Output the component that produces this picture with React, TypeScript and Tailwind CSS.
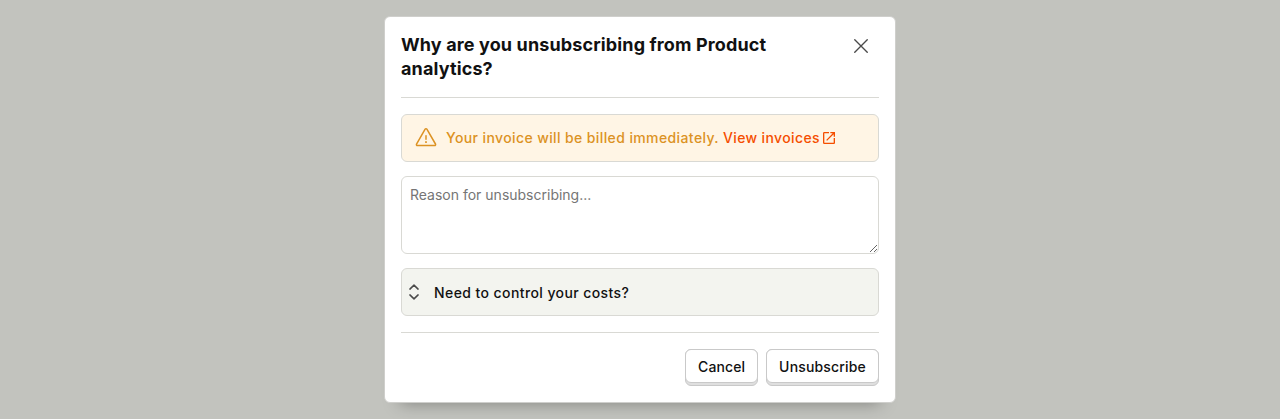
import React from "react";

function CloseIcon() {
  return (
    <svg className="h-6 w-6" viewBox="0 0 24 24" fill="none" stroke="#4a4a4a" strokeWidth="1.4" strokeLinecap="round">
      <path d="M5.75 5.75l12.5 12.5M18.25 5.75l-12.5 12.5" />
    </svg>
  );
}

function WarningIcon() {
  return (
    <svg className="h-6 w-6 shrink-0" viewBox="0 0 24 24" fill="none" stroke="#dc9223" strokeWidth="1.5" strokeLinecap="round" strokeLinejoin="round">
      <path d="M11.13 3.2a1 1 0 0 1 1.74 0l8.6 14.8a1 1 0 0 1-.87 1.5H3.4a1 1 0 0 1-.87-1.5z" />
      <path d="M12 9.75v3.5" />
      <path d="M12 16v.2" strokeWidth="1.8" />
    </svg>
  );
}

function OpenInNewIcon() {
  return (
    <svg className="h-4 w-4" viewBox="0 0 24 24" fill="#f54e00">
      <path d="M19 19H5V5h7V3H5a2 2 0 0 0-2 2v14a2 2 0 0 0 2 2h14c1.1 0 2-.9 2-2v-7h-2v7zM14 3v2h3.59l-9.83 9.83 1.41 1.41L19 6.41V10h2V3h-7z" />
    </svg>
  );
}

function ExpandIcon() {
  return (
    <svg className="h-6 w-6" viewBox="0 0 24 24" fill="none" stroke="#4a4a4a" strokeWidth="1.5" strokeLinecap="round" strokeLinejoin="round">
      <path d="M7.9 9.1L12 5.1l4.1 4M7.9 14.9L12 18.9l4.1-4" />
    </svg>
  );
}

function Button({ children, className }: { children: React.ReactNode; className?: string }) {
  return (
    <button className={`h-[37px] rounded-md border border-[#c9c9c9] bg-[#dfdfdf] pb-[2px] text-sm font-medium text-[#111] ${className ?? ""}`}>
      <span className="-mx-px -mt-px flex h-[34px] items-center rounded-md border border-[#c9c9c9] bg-white px-3 pt-[2px]">
        {children}
      </span>
    </button>
  );
}

export default function App() {
  return (
    <div className="flex h-[419px] items-center justify-center bg-[#c2c3be] font-['Inter',sans-serif] text-sm text-[#111]">
      <div className="flex h-[387px] w-[512px] flex-col rounded-md border border-[#cfcfcc] bg-white px-4 shadow-[0_16px_16px_-16px_rgba(0,0,0,0.35)]">
        <header className="flex h-[81px] shrink-0 items-start justify-between border-b border-[#d9d9d4] pt-4">
          <h3 className="w-[400px] text-lg/6 font-bold tracking-[0.13px]">Why are you unsubscribing from Product analytics?</h3>
          <button aria-label="Close" className="mt-[1px] mr-[6px]">
            <CloseIcon />
          </button>
        </header>
        <section className="flex flex-col pt-4">
          <div className="flex h-12 items-center gap-2 rounded-md border border-[#d9d9d4] bg-[#fff5e5] px-3 font-medium tracking-[0.39px] text-[#dc9223]">
            <WarningIcon />
            <div className="flex items-center">
              <span className="whitespace-pre">Your invoice will be billed immediately. </span>
              <a className="flex items-center gap-px tracking-[0.37px] text-[#f54e00]">
                View invoices
                <OpenInNewIcon />
              </a>
            </div>
          </div>
          <textarea
            placeholder="Reason for unsubscribing..."
            className="mt-[14px] h-[78px] w-full rounded-md border border-[#d9d9d4] bg-white p-2 leading-5 placeholder:text-[#757575]"
          />
          <button className="mt-[14px] flex h-12 items-center gap-2 rounded-md border border-[#d9d9d4] bg-[#f3f4ef] font-medium tracking-[0.41px]">
            <ExpandIcon />
            <span className="pt-[2px]">Need to control your costs?</span>
          </button>
        </section>
        <footer className="mt-4 flex justify-end gap-2 border-t border-[#d9d9d4] pt-4">
          <Button className="tracking-[0.1px]">Cancel</Button>
          <Button className="tracking-[0.17px]">Unsubscribe</Button>
        </footer>
      </div>
    </div>
  );
}
